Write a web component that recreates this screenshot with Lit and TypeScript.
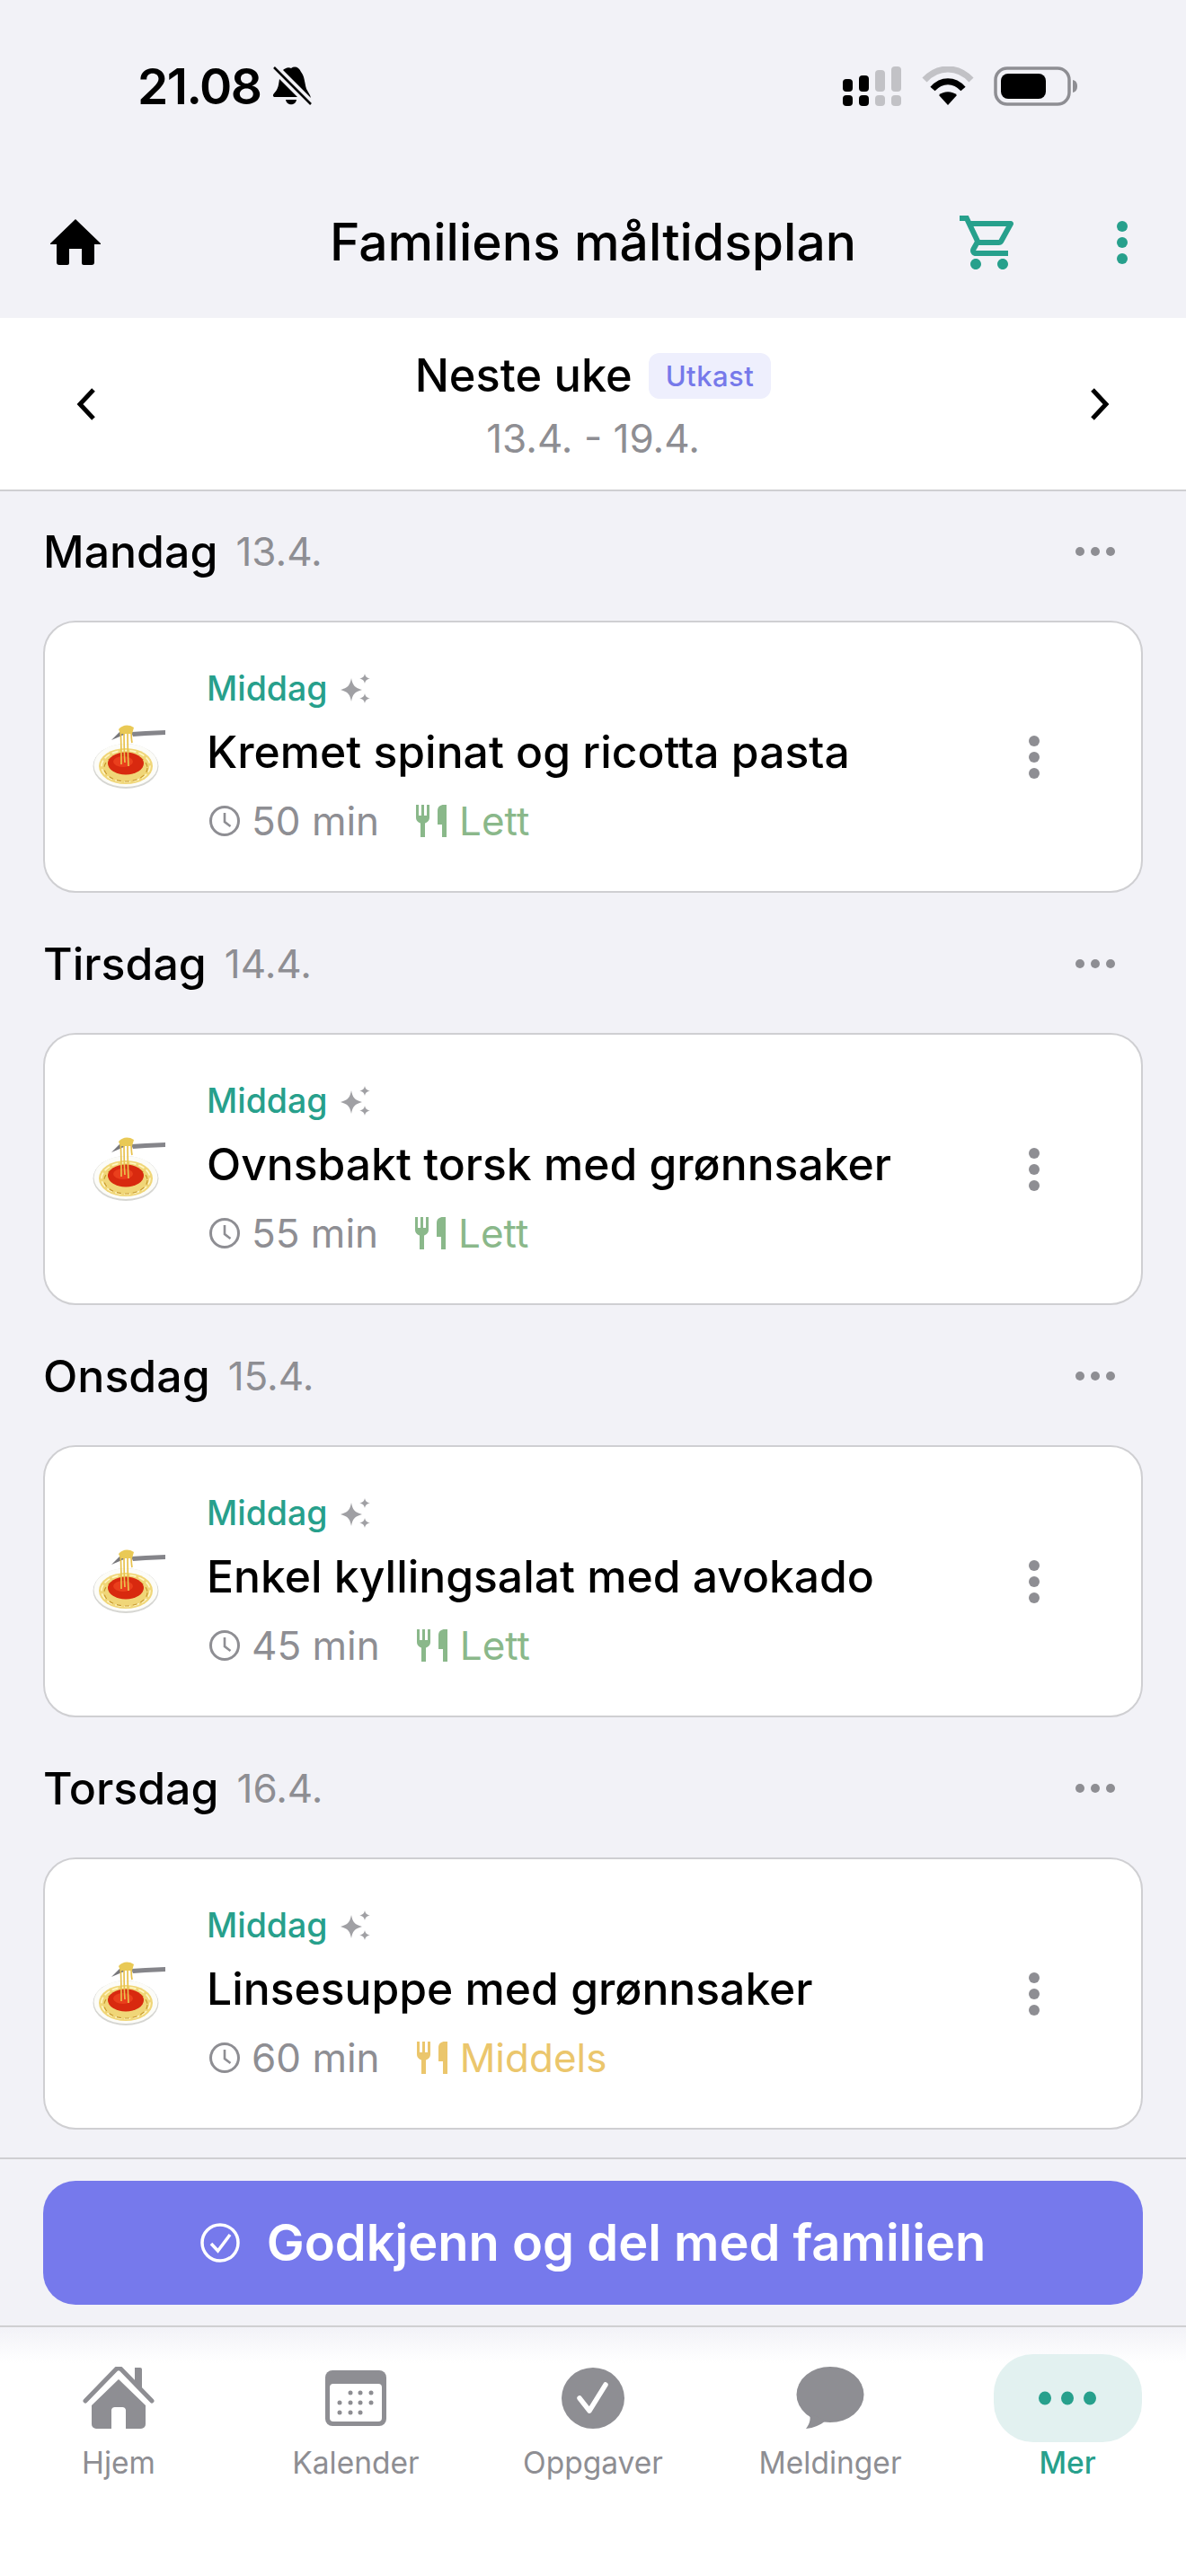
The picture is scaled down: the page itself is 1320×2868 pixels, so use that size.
import { LitElement, html, css, svg } from "lit";
import { customElement } from "lit/decorators.js";

const pasta = svg`<svg class="emoji" viewBox="0 0 84 78" width="84" height="78">
  <path d="M44 14 L60 13 L82 12 V17 L60 18 L46 19 Z" fill="#85858a"/>
  <path d="M22 23 L31 14 L38 13 L36 17 Z" fill="#77777b"/>
  <ellipse cx="38" cy="52" rx="36.500" ry="25" fill="#d6d6d2"/>
  <ellipse cx="38" cy="51" rx="35.500" ry="24" fill="#fcfcf8"/>
  <ellipse cx="38" cy="52" rx="30" ry="20" fill="#f0d678"/>
  <ellipse cx="38" cy="52" rx="27" ry="17.500" fill="none" stroke="#fff6c4" stroke-width="1.600" stroke-dasharray="7 3"/>
  <ellipse cx="38" cy="54" rx="24" ry="15" fill="none" stroke="#c99a2e" stroke-width="1.200" stroke-dasharray="5 4"/>
  <ellipse cx="38" cy="49" rx="20" ry="12.500" fill="#d8290f"/>
  <ellipse cx="35" cy="47" rx="11" ry="6" fill="#ea3f1c"/>
  <path d="M32 11 C33 22 33 34 33 50 M36 10 C36 22 36 36 37 48 M40 8 C40 22 40 34 41 52 M44 9 C44 16 44 22 45 26" fill="none" stroke="#e8c24d" stroke-width="1.700"/>
  <path d="M30 11 C34 6 41 5 47 9 L45 16 L32 16 Z" fill="#e9c955"/>
</svg>`;

const clock = svg`<svg class="ic clk" viewBox="0 0 36 36" width="36" height="36"><circle cx="18" cy="18" r="15.500" fill="none" stroke="currentColor" stroke-width="3"/><path d="M18 9 V19 L24.500 24" fill="none" stroke="currentColor" stroke-width="2.600"/></svg>`;

const cutlery = svg`<svg class="ic" viewBox="0 0 36 38" width="36" height="38" fill="currentColor"><path d="M1 1 H4 V13 H7 V1 H10 V13 H13 V1 H16 V15 C16 19 13 21 11 21.500 V37 H6 V21.500 C4 21 1 19 1 15 Z"/><path d="M25 8 C25 3 28 1 32 1 H35 V37 H30 V23 H25 Z"/></svg>`;

const sparkles = svg`<svg class="spark" viewBox="0 0 34 34" width="34" height="34" fill="#a0a0a4"><path d="M12 5 C13.500 13 15.500 15.500 24 18 C15.500 20.500 13.500 23 12 31 C10.500 23 8.500 20.500 0 18 C8.500 15.500 10.500 13 12 5 Z"/><path d="M27 0 C27.800 3.500 29 4.700 33 5.500 C29 6.300 27.800 7.500 27 11 C26.200 7.500 25 6.300 21 5.500 C25 4.700 26.200 3.500 27 0 Z"/><path d="M27 22 C27.800 25.500 29 26.700 33 27.500 C29 28.300 27.800 29.500 27 33 C26.200 29.500 25 28.300 21 27.500 C25 26.700 26.200 25.500 27 22 Z"/></svg>`;

const dotsV = (cls: string) => svg`<svg class=${cls} viewBox="0 0 14 50" width="14" height="50" fill="currentColor"><circle cx="7" cy="7" r="6"/><circle cx="7" cy="25" r="6"/><circle cx="7" cy="43" r="6"/></svg>`;

const dotsH = svg`<svg viewBox="0 0 44 10" width="44" height="10" fill="#8e8e93"><circle cx="5" cy="5" r="5"/><circle cx="22" cy="5" r="5"/><circle cx="39" cy="5" r="5"/></svg>`;

const days = [
  { day: "Mandag", date: "13.4.", title: "Kremet spinat og ricotta pasta", time: "50 min", level: "Lett", tone: "easy" },
  { day: "Tirsdag", date: "14.4.", title: "Ovnsbakt torsk med grønnsaker", time: "55 min", level: "Lett", tone: "easy" },
  { day: "Onsdag", date: "15.4.", title: "Enkel kyllingsalat med avokado", time: "45 min", level: "Lett", tone: "easy" },
  { day: "Torsdag", date: "16.4.", title: "Linsesuppe med grønnsaker", time: "60 min", level: "Middels", tone: "medium" },
];

const tabs = [
  { label: "Hjem", icon: svg`<svg viewBox="0 0 80 70" width="80" height="70" fill="#8e8e93"><path d="M58 1 H64 A2 2 0 0 1 66 3 V27 L58 19 Z"/><path d="M3 38 L37 3 A4 4 0 0 1 43 3 L77 38" fill="none" stroke="#8e8e93" stroke-width="5" stroke-linecap="round" stroke-linejoin="round"/><path d="M40 14 L70 43 V64 A5 5 0 0 1 65 69 H48 V48 A4 4 0 0 0 44 45 H36 A4 4 0 0 0 32 48 V69 H15 A5 5 0 0 1 10 64 V43 Z"/></svg>` },
  { label: "Kalender", icon: svg`<svg viewBox="0 0 68 62" width="68" height="62"><rect width="68" height="62" rx="8" fill="#8e8e93"/><rect x="5" y="15" width="58" height="42" rx="4" fill="#fff"/><g fill="#8e8e93"><circle cx="28" cy="25" r="2.500"/><circle cx="39" cy="25" r="2.500"/><circle cx="51" cy="25" r="2.500"/><circle cx="16" cy="36" r="2.500"/><circle cx="28" cy="36" r="2.500"/><circle cx="39" cy="36" r="2.500"/><circle cx="51" cy="36" r="2.500"/><circle cx="16" cy="47" r="2.500"/><circle cx="28" cy="47" r="2.500"/><circle cx="39" cy="47" r="2.500"/></g></svg>` },
  { label: "Oppgaver", icon: svg`<svg viewBox="0 0 70 68" width="70" height="68"><ellipse cx="35" cy="34" rx="35" ry="34" fill="#8e8e93"/><path d="M20 34 L31 48 L49 19" fill="none" stroke="#fff" stroke-width="5.500" stroke-linecap="round" stroke-linejoin="round"/></svg>` },
  { label: "Meldinger", icon: svg`<svg viewBox="0 0 76 70" width="76" height="70" fill="#8e8e93"><ellipse cx="38" cy="31" rx="37.500" ry="31"/><path d="M15 52 C17 60 14 65 11 69 C20 68 27 65 33 60 Z"/></svg>` },
  { label: "Mer", active: true, icon: svg`<svg viewBox="0 0 66 18" width="66" height="18" fill="#27a08c"><ellipse cx="8" cy="9" rx="7" ry="7.500"/><ellipse cx="33" cy="9" rx="7" ry="7.500"/><ellipse cx="58" cy="9" rx="7" ry="7.500"/></svg>` },
];

@customElement("app-root")
export class AppRoot extends LitElement {
  static styles = css`
    :host { display: flex; flex-direction: column; width: 1320px; height: 2868px; overflow: hidden; background: #f2f2f7; font-family: Inter, "Liberation Sans", sans-serif; color: #000; }
    svg { display: block; flex: none; }
    .status { height: 122px; display: flex; align-items: flex-end; padding: 0 120px 0 153px; justify-content: space-between; flex: none; }
    .left { display: flex; align-items: center; gap: 12px; height: 48px; margin-bottom: 2px; }
    .time { font-size: 55px; font-weight: 600; letter-spacing: -1.500px; line-height: 48px; }
    .right { display: flex; align-items: center; gap: 22px; height: 48px; margin-bottom: 2px; }
    .appbar { height: 232px; box-sizing: border-box; flex: none; display: grid; grid-template-columns: 1fr auto 1fr; align-items: center; padding: 64px 56px 0; }
    .appbar h1 { margin: 0; font-size: 57px; font-weight: 500; line-height: 64px; }
    .actions { display: flex; justify-content: flex-end; align-items: center; gap: 105px; margin-right: 8px; color: #27a08c; }
    .week { height: 193px; box-sizing: border-box; flex: none; background: #fff; border-bottom: 2px solid #cfcfd2; display: grid; grid-template-columns: 1fr auto 1fr; align-items: center; padding: 0 85px; }
    .week .next { justify-self: end; }
    .wk { display: flex; flex-direction: column; align-items: center; }
    .wk-top { display: flex; align-items: center; gap: 18px; height: 52px; margin-top: 6px; }
    .wk-name { font-size: 50.500px; font-weight: 500; line-height: 52px; }
    .badge { font-size: 31px; font-weight: 500; line-height: 51px; height: 51px; color: #7679ea; background: #eeeffd; border-radius: 12px; padding: 0 19px; letter-spacing: .5px; }
    .wk-date { font-size: 44px; color: #8e8e93; line-height: 50px; margin-top: 19px; }
    .list { flex: 1; min-height: 0; overflow: hidden; padding: 0 48px; display: flex; flex-direction: column; gap: 12px; }
    .head { height: 134px; padding-bottom: 10px; display: flex; align-items: center; flex: none; gap: 20px; }
    .day { font-size: 50px; font-weight: 500; line-height: 60px; }
    .date { font-size: 44px; color: #8e8e93; line-height: 60px; }
    .more { margin-left: auto; margin-right: 31px; }
    .card { height: 303px; box-sizing: border-box; background: #fff; border: 2px solid #cfcfd2; border-radius: 36px; display: flex; align-items: center; padding: 0 112px 0 52px; position: relative; }
    .emoji { margin-right: 44px; margin-top: -6px; }
    .body { flex: 1; display: flex; flex-direction: column; }
    .cat { display: flex; align-items: center; gap: 14px; height: 40px; font-size: 37.500px; font-weight: 500; color: #27a08c; }
    .name { font-size: 49.800px; font-weight: 500; line-height: 60px; margin-top: 20px; white-space: nowrap; }
    .meta { display: flex; align-items: center; font-size: 44px; color: #8e8e93; line-height: 50px; margin-top: 22px; }
    .ic { margin-right: 12px; }
    .clk { margin-left: 2px; }
    .lvl { display: flex; align-items: center; margin-left: 40px; }
    .lvl .ic { margin-right: 13px; }
    .easy { color: #8ab88a; }
    .medium { color: #ebc66c; }
    .kebab { color: #8e8e93; margin-top: 0; }
    .cta { flex: none; border-top: 2px solid #cfcfd2; border-bottom: 2px solid #cfcfd2; padding: 24px 48px 23px; }
    .btn { height: 138px; border-radius: 36px; background: #7679ec; color: #fff; display: flex; align-items: center; justify-content: center; gap: 30px; font-size: 56px; font-weight: 600; }
    .tabs { flex: none; height: 277px; box-sizing: border-box; display: grid; grid-template-columns: repeat(5, 1fr); padding: 30px 0 0; align-items: start; background: linear-gradient(#f2f2f7, #fff 40px); }
    .tab { display: flex; flex-direction: column; align-items: center; color: #8e8e93; font-size: 33.500px; line-height: 40px; }
    .tab.on { color: #27a08c; font-weight: 500; }
    .slot { height: 98px; width: 165px; display: flex; align-items: center; justify-content: center; border-radius: 44px; }
    .on .slot { background: #e2f1f0; }
    .label { margin-top: 3px; }
  `;

  render() {
    return html`
      <div class="status">
        <div class="left">
          <span class="time">21.08</span>
          <svg viewBox="0 0 44 46" width="44" height="46"><path d="M21 3 C25 0 30 2 32 7 C36 12 36 19 38 26 L42 33 L43 36 L12 5 C14 3 18 1 21 3 Z" fill="#000"/><path d="M8 15 L28 35 H3 C1 35 0 33 2 31 C7 26 7 21 8 15 Z" fill="#000"/><path d="M15 38 H27 C26 45 16 45 15 38 Z" fill="#000"/><path d="M2 2 L43 43" stroke="#000" stroke-width="2.500"/></svg>
        </div>
        <div class="right">
          <svg viewBox="0 0 66 46" width="66" height="46"><g fill="#000"><rect x="0" y="15" width="11" height="14" rx="4"/><rect x="18" y="11" width="11" height="18" rx="4"/><rect x="0" y="33" width="11" height="12" rx="4"/><rect x="18" y="33" width="11" height="12" rx="4"/></g><g fill="#c2c2c6"><rect x="36" y="5" width="11" height="24" rx="4"/><rect x="54" y="1" width="11" height="28" rx="4"/><rect x="36" y="33" width="11" height="12" rx="4"/><rect x="54" y="33" width="11" height="12" rx="4"/></g></svg>
          <svg viewBox="0 0 58 44" width="58" height="44"><path d="M3 15 C18 -1 40 -1 55 15" fill="none" stroke="#c2c2c6" stroke-width="7"/><path d="M12 25 C22 14 36 14 46 25" fill="none" stroke="#000" stroke-width="7"/><path d="M19 32 C24 27 34 27 39 32 L29 43 Z" fill="#000"/></svg>
          <svg viewBox="0 0 94 44" width="94" height="44"><rect x="2" y="2" width="82" height="40" rx="13" fill="none" stroke="#8e8e93" stroke-width="3.500"/><rect x="8" y="8" width="50" height="28" rx="8" fill="#000"/><path d="M88 15 C92 16 93 19 93 22 C93 25 92 28 88 29 Z" fill="#8e8e93"/></svg>
        </div>
      </div>
      <div class="appbar">
        <div><svg viewBox="0 0 56 52" width="56" height="52" fill="#000"><path d="M28 0 L56 27 V28 H49 V48 A3 3 0 0 1 46 51 H37 A2 2 0 0 1 35 49 V33 H21 V49 A2 2 0 0 1 19 51 H10 A3 3 0 0 1 7 48 V28 H0 V27 Z"/></svg></div>
        <h1>Familiens måltidsplan</h1>
        <div class="actions">
          <svg viewBox="0 0 24 24" width="72" height="72" fill="currentColor"><path d="M15.550 13c.75 0 1.410-.41 1.750-1.030l3.580-6.490c.37-.66-.11-1.480-.87-1.480H5.210l-.94-2H1v2h2l3.600 7.590-1.350 2.440C4.520 15.370 5.480 17 7 17h12v-2H7l1.100-2h7.450zM6.160 6h12.150l-2.760 5H8.530L6.160 6zM7 18c-1.100 0-1.990.9-1.990 2S5.900 22 7 22s2-.9 2-2-.9-2-2-2zm10 0c-1.100 0-1.990.9-1.990 2s.89 2 1.990 2 2-.9 2-2-.9-2-2-2z"/></svg>
          ${dotsV("")}
        </div>
      </div>
      <div class="week">
        <svg viewBox="0 0 22 36" width="22" height="36"><path d="M19 2 L4 18 L19 34" fill="none" stroke="#000" stroke-width="5"/></svg>
        <div class="wk">
          <div class="wk-top"><span class="wk-name">Neste uke</span><span class="badge">Utkast</span></div>
          <div class="wk-date">13.4. - 19.4.</div>
        </div>
        <svg class="next" viewBox="0 0 22 36" width="22" height="36"><path d="M3 2 L18 18 L3 34" fill="none" stroke="#000" stroke-width="5"/></svg>
      </div>
      <div class="list">
        ${days.map(
          (d) => html`<section>
            <div class="head"><span class="day">${d.day}</span><span class="date">${d.date}</span><span class="more">${dotsH}</span></div>
            <div class="card">
              ${pasta}
              <div class="body">
                <div class="cat">Middag ${sparkles}</div>
                <div class="name">${d.title}</div>
                <div class="meta">${clock}<span>${d.time}</span><span class="lvl ${d.tone}">${cutlery}${d.level}</span></div>
              </div>
              ${dotsV("kebab")}
            </div>
          </section>`
        )}
      </div>
      <div class="cta">
        <div class="btn">
          <svg viewBox="0 0 44 44" width="44" height="44"><circle cx="22" cy="22" r="20" fill="none" stroke="#fff" stroke-width="3.500"/><path d="M12 23 L19.500 31 L33 13" fill="none" stroke="#fff" stroke-width="3.500"/></svg>
          <span>Godkjenn og del med familien</span>
        </div>
      </div>
      <div class="tabs">
        ${tabs.map(
          (t) => html`<div class="tab ${t.active ? "on" : ""}"><div class="slot">${t.icon}</div><div class="label">${t.label}</div></div>`
        )}
      </div>
    `;
  }
}
